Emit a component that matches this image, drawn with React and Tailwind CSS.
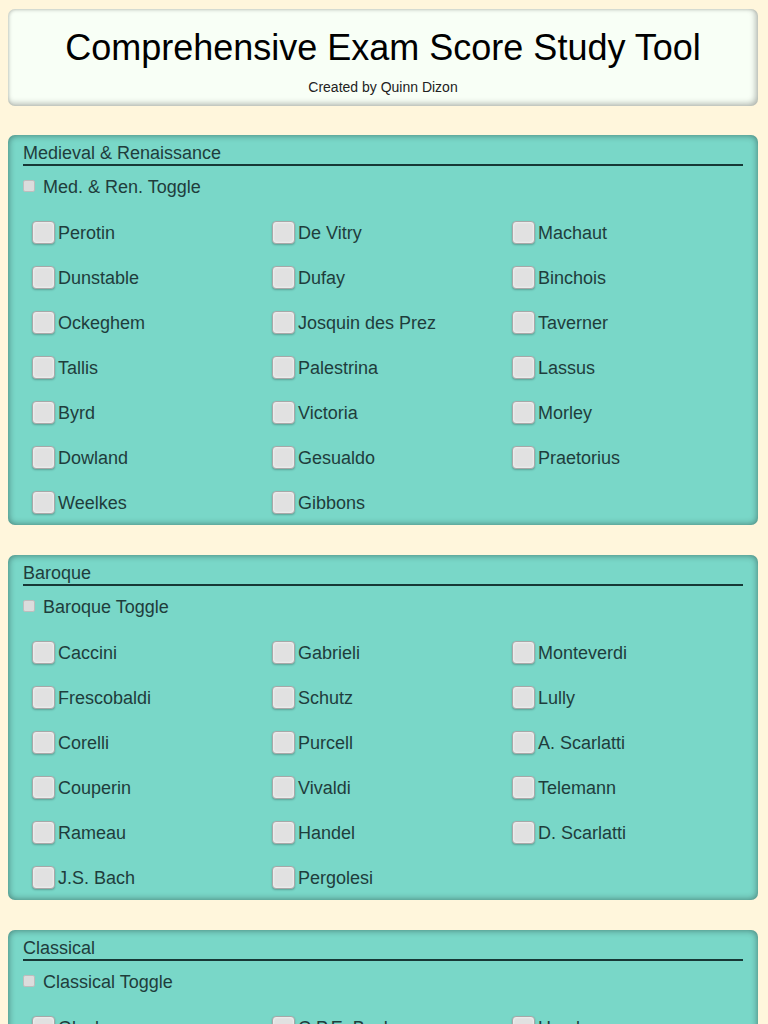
import React from "react";

const sections = [
  {
    title: "Medieval & Renaissance",
    toggle: "Med. & Ren. Toggle",
    items: ["Perotin","De Vitry","Machaut","Dunstable","Dufay","Binchois","Ockeghem","Josquin des Prez","Taverner","Tallis","Palestrina","Lassus","Byrd","Victoria","Morley","Dowland","Gesualdo","Praetorius","Weelkes","Gibbons"],
  },
  {
    title: "Baroque",
    toggle: "Baroque Toggle",
    items: ["Caccini","Gabrieli","Monteverdi","Frescobaldi","Schutz","Lully","Corelli","Purcell","A. Scarlatti","Couperin","Vivaldi","Telemann","Rameau","Handel","D. Scarlatti","J.S. Bach","Pergolesi"],
  },
  {
    title: "Classical",
    toggle: "Classical Toggle",
    items: ["Gluck","C.P.E. Bach","Haydn","Mozart","Clementi","Beethoven"],
  },
];

function Box() {
  return (
    <span className="w-[23px] h-[23px] shrink-0 rounded-[4px] border border-[#a8a8a8] bg-[#e1e1e1] shadow-[inset_0_0_3px_rgba(255,255,255,0.9),0_1px_2px_rgba(0,0,0,0.25)]" />
  );
}

function Section({ s }) {
  return (
    <div className="rounded-[7px] bg-[#79d7c8] px-[15px] pt-[9px] shadow-[inset_0_0_7px_rgba(0,0,0,0.45)] text-[#1f3d3c]">
      <div className="text-[18px] leading-[19px] pb-[1px] border-b-2 border-[#173836]">{s.title}</div>
      <div className="mt-[10px] h-[22px] flex items-center">
        <span className="w-[12px] h-[12px] rounded-[2px] border border-[#bdbdbd] bg-[#dcdcdc] mr-[8px] -mt-[2px]" />
        <span className="text-[18px] leading-[22px]">{s.toggle}</span>
      </div>
      <div className="mt-[12px] grid grid-cols-3">
        {s.items.map((it) => (
          <div key={it} className="h-[45px] flex items-center pl-[9px]">
            <Box />
            <span className="ml-[3px] text-[18px] leading-[22px]">{it}</span>
          </div>
        ))}
      </div>
    </div>
  );
}

export default function App() {
  return (
    <div className="min-h-screen bg-[#fff6dc] px-[8px] pt-[9px] pb-[30px] pr-[10px]" style={{ fontFamily: '"Liberation Sans", Arial, sans-serif' }}>
      <div className="h-[97px] rounded-[7px] bg-[#f8fff6] shadow-[inset_-2px_-2px_6px_rgba(0,0,0,0.3),inset_1px_1px_3px_rgba(0,0,0,0.12)] flex flex-col items-center">
        <div className="mt-[19px] text-[36px] leading-[40px] text-black">Comprehensive Exam Score Study Tool</div>
        <div className="mt-[11px] text-[14px] leading-[16px] text-[#222]">Created by Quinn Dizon</div>
      </div>
      <div className="mt-[29px] flex flex-col gap-[30px]">
        {sections.map((s) => (
          <Section key={s.title} s={s} />
        ))}
      </div>
    </div>
  );
}
